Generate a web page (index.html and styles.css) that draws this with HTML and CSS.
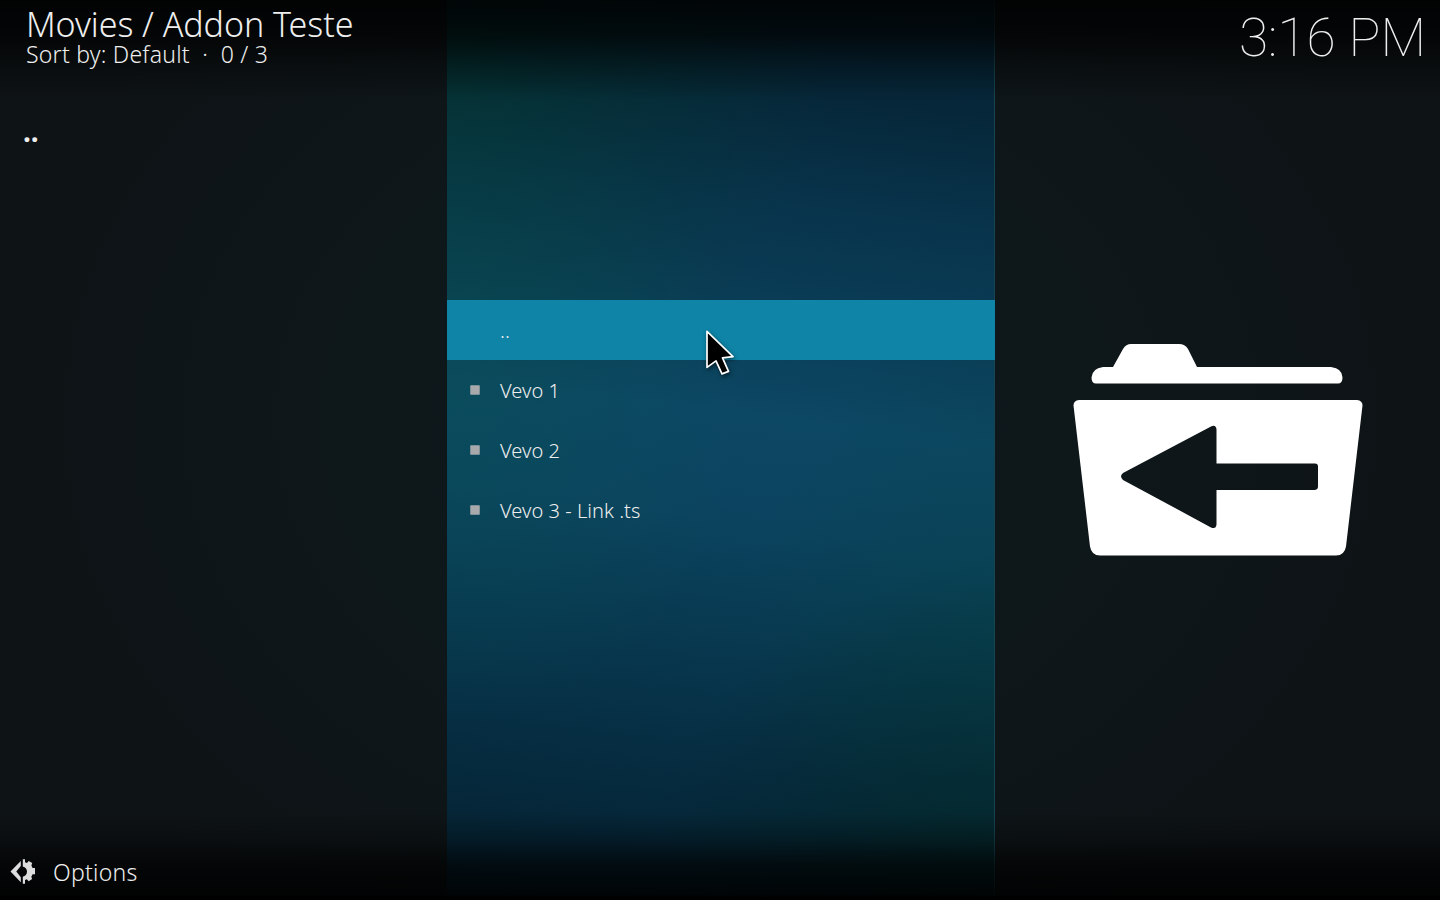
FILE: index.html
```html
<!DOCTYPE html>
<html lang="en">
<head>
<meta charset="utf-8">
<title>Movies / Addon Teste</title>
<link rel="stylesheet" href="styles.css">
</head>
<body>
<div class="screen">
  <aside class="left">
    <header class="heading">
      <h1 class="title">Movies / Addon Teste</h1>
      <p class="sort">Sort by: Default &nbsp;·&nbsp; 0 / 3</p>
    </header>
    <div class="item-label">..</div>
    <div class="options">
      <svg class="gear" width="26" height="26" viewBox="0 0 26 26">
        <path d="M10.800 2v5L6.300 12.500l4.500 5.700v5L.5 12.500z"/>
        <path d="M12.800 .3h2.200v3l2 .6 1.700-1.800 3.500 1.900-.8 2.600 1.200 2.500H25v6.200h-2.400l-1.300 2.400.8 2.400-3.400 2.100-1.900-1.900-1.800.6V24.800h-2.200v-7c2.500-.5 4.200-2.500 4.200-5.200s-1.700-4.700-4.200-5.200z"/>
      </svg>
      <span class="options-text">Options</span>
    </div>
  </aside>
  <main class="panel">
    <ul class="list">
      <li class="row selected"><span class="row-text">..</span></li>
      <li class="row"><i class="bullet"></i><span class="row-text">Vevo 1</span></li>
      <li class="row"><i class="bullet"></i><span class="row-text">Vevo 2</span></li>
      <li class="row"><i class="bullet"></i><span class="row-text">Vevo 3 - Link .ts</span></li>
    </ul>
  </main>
  <aside class="right">
    <time class="clock">3:16 PM</time>
    <svg class="folder" width="290" height="213" viewBox="0 -.4 290 213">
      <path d="M40 23.500L50 5.500Q53 .5 58 .5H106Q112 .5 115 5.500L124 23.500H258Q269.500 25 269.500 34Q269.500 40 265 40H23Q18.500 40 18.500 34Q19 25 30 23.500z"/>
      <path fill-rule="evenodd" d="M6 56.500H284Q289.500 57 289.500 62L273 203Q271.500 212 263 212H27Q18.500 212 17 203L.5 62Q.5 57 6 56.500zM50 129.500Q46 132.800 50 136.500L138 184Q143 186 143.500 181V146.500H242Q245 146 245 143V123Q245 120 242 120H143.500V86Q143 81 138 83z"/>
    </svg>
  </aside>
  <div class="shade"></div>
  <svg class="cursor" width="44" height="56" viewBox="0 -.4 44 56">
    <path d="M8 6L34 31.200L23.500 32.500L29.500 46L23 48.500L17 35.500L8 42z"/>
  </svg>
</div>
</body>
</html>
```
FILE: styles.css
```css
* { box-sizing: border-box; }
body { margin: 0; background: #000; }
.screen {
  position: relative;
  display: grid;
  grid-template-columns: 447px 548px 445px;
  width: 1440px;
  height: 900px;
  overflow: hidden;
  color: #eee;
  font-family: "Noto Sans", sans-serif;
  font-weight: 300;
  background: radial-gradient(ellipse 750px 600px at 720px 420px, #0d191d 0%, #0e171a 50%, #0e1315 100%);
}
.left, .right { display: flex; flex-direction: column; }
.heading, .item-label, .options, .clock { z-index: 2; }
.heading { padding: 4px 0 0 26px; height: 115px; white-space: nowrap; }
.title { margin: 0; font-size: 34px; line-height: 41px; font-weight: 300; letter-spacing: -.05px; }
.sort { margin: 0; font-size: 23px; line-height: 18px; letter-spacing: .24px; }
.item-label { padding-left: 23px; font-size: 28px; line-height: 32px; font-weight: 700; }
.options { display: flex; align-items: center; gap: 17px; height: 34px; margin: auto 0 11px 10px; }
.gear { fill: #ddd; }
.options-text { font-size: 23px; line-height: 34px; letter-spacing: .26px; }
.panel {
  padding-top: 300px;
  border-right: 1px solid #174452;
  background:
    radial-gradient(ellipse 380px 360px at 0 60px, rgba(0, 60, 30, .36), transparent),
    radial-gradient(ellipse 300px 330px at 0 400px, rgba(8, 84, 84, .4), transparent),
    radial-gradient(ellipse 350px 330px at 100% 100%, rgba(2, 34, 24, .5), transparent),
    radial-gradient(ellipse 250px 300px at 100% 620px, rgba(4, 66, 60, .3), transparent),
    linear-gradient(187deg, #052536 0%, #062739 12%, #08344c 24%, #0a3d56 35%, #0c4764 46%, #0b435f 57%, #083a51 68%, #062d42 82%, #052536 92%, #042233 100%);
}
.list { width: 548px; margin: 0; padding: 0; list-style: none; }
.row { display: flex; align-items: center; height: 60px; padding-left: 53px; font-size: 20px; letter-spacing: .05px; }
.row-text { line-height: 28px; padding-top: 2px; }
.selected { background: #0f84a6; }
.bullet { width: 10px; height: 10px; margin: 0 20px 0 -30px; border: .5px solid #7e9198; border-radius: 1px; background: #a7a9aa; }
.clock { align-self: flex-end; height: 76px; padding-right: 14px; font: 100 53.200px/76px Roboto, sans-serif; white-space: nowrap; }
.folder { margin: 267px 0 0 78px; fill: #fff; }
.shade {
  position: absolute;
  inset: 0;
  z-index: 1;
  background:
    linear-gradient(rgba(0, 0, 0, .88), rgba(0, 0, 0, .72) 35px, rgba(0, 0, 0, .3) 70px, transparent 100px),
    linear-gradient(to top, #000 0, #000 3px, rgba(0, 0, 0, .87) 5px, rgba(0, 0, 0, .68) 35px, rgba(0, 0, 0, .25) 62px, transparent 88px);
}
.cursor {
  position: absolute;
  left: 699px;
  top: 325px;
  z-index: 3;
  fill: #000;
  stroke: #fff;
  stroke-width: 1.7;
  stroke-linejoin: round;
  filter: drop-shadow(1px 2px 2px rgba(0, 0, 0, .5));
}
```
